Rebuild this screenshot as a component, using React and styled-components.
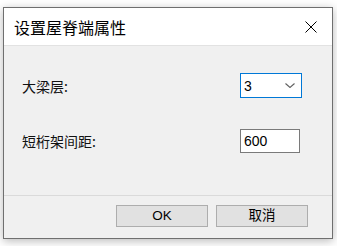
import React from 'react';
import styled, { createGlobalStyle } from 'styled-components';

const GlobalStyle = createGlobalStyle`
  html, body {
    margin: 0;
    padding: 0;
    background: #ffffff;
  }
  * {
    box-sizing: border-box;
  }
`;

const Page = styled.div`
  width: 337px;
  height: 246px;
  padding: 7px 0 0 3px;
  font-family: "Noto Sans CJK SC", "Liberation Sans", sans-serif;
`;

const Window = styled.div`
  width: 330px;
  height: 232px;
  border: 1px solid #6f6f6f;
  background: #f0f0f0;
  box-shadow: 0 2px 9px rgba(0, 0, 0, 0.28);
  display: flex;
  flex-direction: column;
`;

const TitleBar = styled.div`
  height: 38px;
  background: #ffffff;
  border-bottom: 1px solid #e2e2e2;
  display: flex;
  align-items: center;
  justify-content: space-between;
  padding: 0 15px 0 10px;
`;

const Title = styled.span`
  font-size: 16px;
  color: #000;
  line-height: 1;
  margin-top: 1px;
`;

const CloseButton = styled.button`
  border: none;
  background: transparent;
  padding: 0;
  width: 12px;
  height: 12px;
  display: flex;
`;

const Body = styled.div`
  flex: 1;
  padding: 27px 0 0 18px;
  display: grid;
  grid-template-columns: 218px auto;
  grid-template-rows: 25px 24px;
  row-gap: 31px;
  align-content: start;
  align-items: center;
`;

const Label = styled.span`
  font-size: 14px;
  color: #111;
  line-height: 1;
`;

const Field = styled.div`
  width: ${p => p.$width}px;
  height: ${p => p.$height}px;
  background: #ffffff;
  border: 1px solid ${p => (p.$focused ? '#0078d7' : '#7a7a7a')};
  display: flex;
  align-items: center;
  justify-content: space-between;
  padding: 0 6px 0 3px;
  font-family: "Liberation Sans", Arial, sans-serif;
  font-size: 14px;
  color: #000;
`;

const Footer = styled.div`
  border-top: 1px solid #dadada;
  padding: 9px 24px 11px 0;
  display: flex;
  justify-content: flex-end;
  gap: 8px;
`;

const Button = styled.button`
  width: 92px;
  height: 22px;
  background: #e1e1e1;
  border: 1px solid #adadad;
  font-family: "Liberation Sans", "Noto Sans CJK SC", sans-serif;
  font-size: 13.5px;
  color: #000;
  padding: 0;
  line-height: 1;
`;

const Chevron = () => (
  <svg width="10" height="5" viewBox="0 0 10 5">
    <path d="M0.5 0.5 L5 4.5 L9.5 0.5" fill="none" stroke="#606060" strokeWidth="1.1" />
  </svg>
);

const CloseIcon = () => (
  <svg width="12" height="12" viewBox="0 0 12 12">
    <path d="M0.5 0.5 L11.5 11.5 M11.5 0.5 L0.5 11.5" stroke="#000" strokeWidth="1" />
  </svg>
);

export default function App() {
  return (
    <Page>
      <GlobalStyle />
      <Window>
        <TitleBar>
          <Title>设置屋脊端属性</Title>
          <CloseButton aria-label="close">
            <CloseIcon />
          </CloseButton>
        </TitleBar>

        <Body>
          <Label>大梁层:</Label>
          <Field $width={62} $height={25} $focused>
            <span>3</span>
            <Chevron />
          </Field>

          <Label>短桁架间距:</Label>
          <Field $width={60} $height={24}>
            <span>600</span>
          </Field>
        </Body>

        <Footer>
          <Button>OK</Button>
          <Button>取消</Button>
        </Footer>
      </Window>
    </Page>
  );
}
